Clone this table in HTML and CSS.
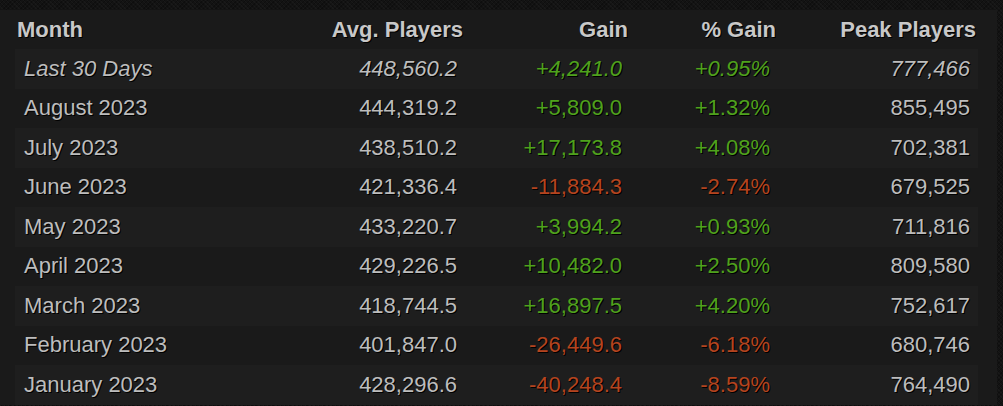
FILE: index.html
```html
<!DOCTYPE html>
<html>
<head>
<meta charset="utf-8">
<link rel="stylesheet" href="styles.css">
</head>
<body>
<div class="panel">
  <div class="row head">
    <div class="c month">Month</div>
    <div class="c num">Avg. Players</div>
    <div class="c num">Gain</div>
    <div class="c num">% Gain</div>
    <div class="c num">Peak Players</div>
  </div>
  <div class="row odd italic">
    <div class="c month">Last 30 Days</div>
    <div class="c num">448,560.2</div>
    <div class="c num up">+4,241.0</div>
    <div class="c num up">+0.95%</div>
    <div class="c num">777,466</div>
  </div>
  <div class="row">
    <div class="c month">August 2023</div>
    <div class="c num">444,319.2</div>
    <div class="c num up">+5,809.0</div>
    <div class="c num up">+1.32%</div>
    <div class="c num">855,495</div>
  </div>
  <div class="row odd">
    <div class="c month">July 2023</div>
    <div class="c num">438,510.2</div>
    <div class="c num up">+17,173.8</div>
    <div class="c num up">+4.08%</div>
    <div class="c num">702,381</div>
  </div>
  <div class="row">
    <div class="c month">June 2023</div>
    <div class="c num">421,336.4</div>
    <div class="c num down">-11,884.3</div>
    <div class="c num down">-2.74%</div>
    <div class="c num">679,525</div>
  </div>
  <div class="row odd">
    <div class="c month">May 2023</div>
    <div class="c num">433,220.7</div>
    <div class="c num up">+3,994.2</div>
    <div class="c num up">+0.93%</div>
    <div class="c num">711,816</div>
  </div>
  <div class="row">
    <div class="c month">April 2023</div>
    <div class="c num">429,226.5</div>
    <div class="c num up">+10,482.0</div>
    <div class="c num up">+2.50%</div>
    <div class="c num">809,580</div>
  </div>
  <div class="row odd">
    <div class="c month">March 2023</div>
    <div class="c num">418,744.5</div>
    <div class="c num up">+16,897.5</div>
    <div class="c num up">+4.20%</div>
    <div class="c num">752,617</div>
  </div>
  <div class="row">
    <div class="c month">February 2023</div>
    <div class="c num">401,847.0</div>
    <div class="c num down">-26,449.6</div>
    <div class="c num down">-6.18%</div>
    <div class="c num">680,746</div>
  </div>
  <div class="row odd">
    <div class="c month">January 2023</div>
    <div class="c num">428,296.6</div>
    <div class="c num down">-40,248.4</div>
    <div class="c num down">-8.59%</div>
    <div class="c num">764,490</div>
  </div>
</div>
</body>
</html>
```
FILE: styles.css
```css
html, body {
  margin: 0;
  padding: 0;
  height: 100%;
  overflow: hidden;
}
body {
  background-color: #131313;
  background-image:
    repeating-linear-gradient(45deg, rgba(255,255,255,0.025) 0 1px, transparent 1px 3px),
    repeating-linear-gradient(-45deg, rgba(0,0,0,0.25) 0 1px, transparent 1px 3px);
  font-family: "Liberation Sans", Arial, sans-serif;
  font-size: 22px;
  color: #bdbdbd;
  padding-top: 10px;
}
.panel {
  width: 963px;
  background: #1a1a1a;
  padding: 0 19px 0 15px;
}
.row {
  display: grid;
  grid-template-columns: 285px 165px 165px 148px 200px;
  height: 39.5px;
  align-items: center;
  text-shadow: 1px 1px 0 #000;
}
.row.head {
  height: 39px;
  font-weight: bold;
  color: #c8c8c8;
}
.row.odd {
  background: #1e1e1e;
}
.italic {
  font-style: italic;
}
.c {
  white-space: nowrap;
}
.month {
  padding-left: 9px;
}
.head .month {
  padding-left: 2px;
}
.num {
  text-align: right;
  padding-right: 8px;
}
.head .num {
  padding-right: 2px;
}
.up {
  color: #4fa21d;
}
.down {
  color: #b5441f;
}
```
